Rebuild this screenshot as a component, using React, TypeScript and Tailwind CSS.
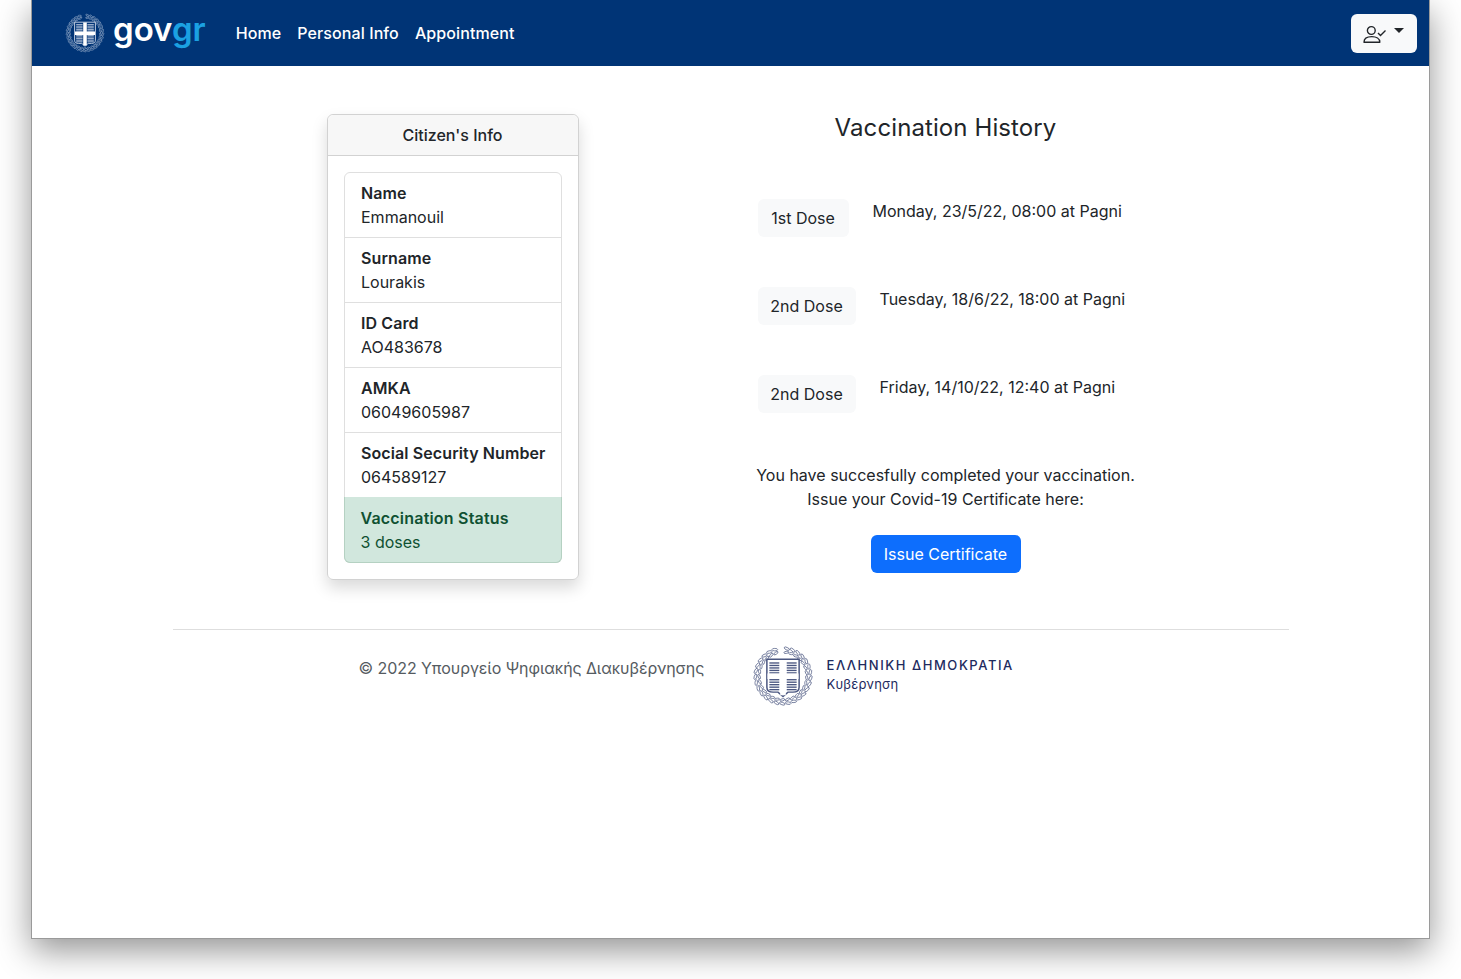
const rows = [
  { label: "Name", value: "Emmanouil" },
  { label: "Surname", value: "Lourakis" },
  { label: "ID Card", value: "AO483678" },
  { label: "AMKA", value: "06049605987" },
  { label: "Social Security Number", value: "064589127" },
];

const doses = [
  { dose: "1st Dose", width: "w-[91px]", when: "Monday, 23/5/22, 08:00 at Pagni" },
  { dose: "2nd Dose", width: "w-[98px]", when: "Tuesday, 18/6/22, 18:00 at Pagni" },
  { dose: "2nd Dose", width: "w-[98px]", when: "Friday, 14/10/22, 12:40 at Pagni" },
];

const leaves = Array.from({ length: 28 }, (_, i) => 8 + i * 12.4);

// Greek coat of arms: striped shield with a cross, inside a laurel wreath
function Emblem({ color, stripe, cross, size }: { color: string; stripe: string; cross: string; size: number }) {
  const top = [29, 33, 37, 41, 45];
  const bottom = [56, 60, 64, 68, 72];
  return (
    <svg width={size} height={size} viewBox="0 0 100 100" fill="none">
      {leaves.map((a) => (
        <g key={a} transform={`rotate(${a} 50 50)`}>
          <ellipse cx="50" cy="5.5" rx="4.6" ry="2" stroke={color} strokeWidth="1.1" transform="rotate(18 50 5.5)" />
          <ellipse cx="50" cy="11.5" rx="4" ry="1.7" stroke={color} strokeWidth="1.1" transform="rotate(-18 50 11.5)" />
        </g>
      ))}
      <path
        d="M24 23H76V68C76 74 72 76 66 76H58L50 83L42 76H34C28 76 24 74 24 68Z"
        stroke={color}
        strokeWidth="2.4"
      />
      {[...top, ...bottom].map((y) => (
        <g key={y}>
          <path d={`M28 ${y}H44`} stroke={stripe} strokeWidth="2.2" />
          <path d={`M56 ${y}H72`} stroke={stripe} strokeWidth="2.2" />
        </g>
      ))}
      <path d="M25 50.5H75M50 24V81" stroke={cross} strokeWidth="9" />
    </svg>
  );
}

function UserCheckIcon() {
  return (
    <svg width="24" height="24" viewBox="0 0 24 24" fill="none" stroke="#212529" strokeWidth="1.4">
      <circle cx="8.3" cy="9.5" r="3.9" />
      <path d="M1 21.2C1 17.6 4.2 15.6 8.8 15.6C13.2 15.6 16.8 17.6 16.8 21.2Z" strokeLinejoin="round" />
      <path d="M15 12L17.5 14.5L22.5 9.5" />
    </svg>
  );
}

export default function App() {
  return (
    <div className="min-h-[979px] overflow-hidden bg-white font-['Inter',sans-serif] text-base leading-6 text-[#212529]">
      <div className="ml-[31px] h-[939px] w-[1399px] border-x border-b border-[#9a9a9a] bg-white shadow-[0_12px_32px_rgba(0,0,0,0.42)]">
        <nav className="flex h-[66px] items-center bg-[#003476] pl-[33px] pr-[12px]">
          <Emblem color="#c3cfe2" stripe="#c3cfe2" cross="#ffffff" size={40} />
          <span className="-mt-[8px] ml-[8px] text-[33px] leading-none font-semibold text-white">
            gov<span className="text-[#1ba1e2]">gr</span>
          </span>
          <div className="ml-[30px] flex gap-4 font-medium tracking-[0.1px] text-white">
            <span>Home</span>
            <span>Personal Info</span>
            <span>Appointment</span>
          </div>
          <button className="ml-auto flex h-[39px] w-[66px] items-center justify-center gap-[7px] rounded-md bg-[#f8f9fa] pr-[2px]">
            <UserCheckIcon />
            <span className="mb-[5px] border-x-[5px] border-t-[5px] border-x-transparent border-t-[#212529]" />
          </button>
        </nav>

        <main className="mx-auto w-[1116px]">
          <div className="grid grid-cols-[561px_424px] pt-[48px]">
            <div className="flex justify-center pr-px">
              <section className="h-[466px] w-[252px] rounded-md border border-[#d2d2d2] shadow-[0_8px_16px_rgba(0,0,0,0.15)]">
                <h2 className="flex h-[41px] items-center justify-center rounded-t-md border-b border-[#d2d2d2] bg-[#f7f7f7] font-medium">
                  Citizen's Info
                </h2>
                <div className="p-4">
                  <ul className="rounded-md border border-[#dfdfdf]">
                    {rows.map((r) => (
                      <li key={r.label} className="h-[65px] border-b border-[#dfdfdf] pt-2 pl-[16.5px]">
                        <div className="font-semibold tracking-[0.1px] whitespace-nowrap">{r.label}</div>
                        <div>{r.value}</div>
                      </li>
                    ))}
                    <li className="-m-px h-[66px] rounded-b-md border border-t-0 border-[#b5d1c2] bg-[#d1e7dd] px-4 pt-[9px] text-[#0f5132]">
                      <div className="font-semibold tracking-[0.2px]">Vaccination Status</div>
                      <div>3 doses</div>
                    </li>
                  </ul>
                </div>
              </section>
            </div>

            <div className="px-6">
              <h1 className="-mx-6 text-center text-2xl leading-7 tracking-[0.1px]">Vaccination History</h1>
              <div className="mt-[57px] flex flex-col gap-[50px]">
                {doses.map((d) => (
                  <div key={d.when} className="flex gap-6">
                    <span className={`flex h-[38px] items-center justify-center rounded-md bg-[#f8f9fa] ${d.width}`}>
                      {d.dose}
                    </span>
                    <span>{d.when}</span>
                  </div>
                ))}
              </div>
              <p className="-mx-6 mt-[50px] text-center">
                You have succesfully completed your vaccination.
                <br />
                Issue your Covid-19 Certificate here:
              </p>
              <div className="mt-6 flex justify-center">
                <button className="h-[38px] w-[150px] rounded-md bg-[#0d6efd] text-white">Issue Certificate</button>
              </div>
            </div>
          </div>

          <footer className="mt-[49px] flex border-t border-[#dedede] pt-[15px]">
            <p className="mt-[11px] ml-[186px] w-[346px] tracking-[-0.07px] whitespace-nowrap text-[#555b61]">
              © 2022 Υπουργείο Ψηφιακής Διακυβέρνησης
            </p>
            <div className="ml-[47px] flex items-center">
              <Emblem color="#4a5680" stripe="#4a5680" cross="#ffffff" size={62} />
              <div className="-mt-[2px] ml-[13px] text-[#1e2a5e]">
                <div className="text-[13px] leading-[19px] font-medium tracking-[1.55px]">ΕΛΛΗΝΙΚΗ ΔΗΜΟΚΡΑΤΙΑ</div>
                <div className="text-[13px] leading-[19px] tracking-[0.2px]">Κυβέρνηση</div>
              </div>
            </div>
          </footer>
        </main>
      </div>
    </div>
  );
}
